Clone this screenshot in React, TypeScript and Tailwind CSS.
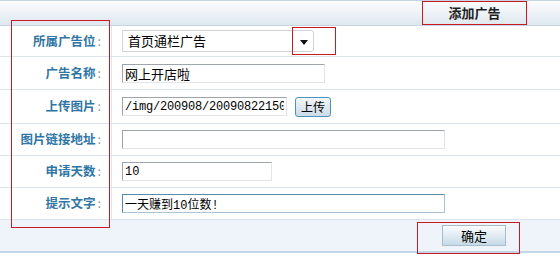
import React from 'react';

const font = { fontFamily: '"Liberation Mono", "Noto Sans CJK SC", monospace' };
const cjk = { fontFamily: '"Noto Sans CJK SC", sans-serif' };

interface RowProps {
  label: string;
  h: string;
  children: React.ReactNode;
}

// 한 줄: 왼쪽 라벨 + 오른쪽 입력
const Row: React.FC<RowProps> = ({ label, h, children }) => (
  <div className={`grid grid-cols-[112px_1fr] border-b border-[#d9e4ed] ${h}`}>
    <div className="flex items-center justify-end pr-[10px] border-r border-[#dde6ee] text-[12.5px] font-bold text-[#2f76a5]" style={cjk}>
      {label}
      <span className="font-normal text-[#8a9aa8] ml-[2px]">:</span>
    </div>
    <div className="flex items-center pl-[10px]">{children}</div>
  </div>
);

const inputCls =
  'h-[19px] bg-white border border-t-[#9da4ab] border-l-[#9da4ab] border-b-[#e2e5e8] border-r-[#e2e5e8] px-[2px] text-[12px] leading-[17px] text-black outline-none';

export default function App() {
  return (
    <div className="relative w-[560px] h-[261px] bg-white overflow-hidden" style={font}>
      {/* header */}
      <div className="h-[26px] border-t border-[#9eb0c0] border-b border-[#c6d5e2] bg-gradient-to-b from-[#fbfcfd] to-[#dfe8ef] flex justify-end">
        <div className="w-[105px] mr-[33px] flex items-center justify-center text-[13px] font-bold text-[#1e1e1e]" style={cjk}>
          添加广告
        </div>
      </div>

      <Row label="所属广告位" h="h-[31px]">
        <div className="relative w-[192px] h-[22px] border border-[#cfd3d7] rounded-r-[3px] bg-white flex items-center pl-[5px] text-[13px]" style={cjk}>
          首页通栏广告
          <svg className="absolute right-[5px] top-[9px]" width="8" height="5" viewBox="0 0 8 5">
            <path d="M0 0 H8 L4 5 Z" fill="#111" />
          </svg>
        </div>
      </Row>
      <Row label="广告名称" h="h-[33px]">
        <input className={`${inputCls} w-[203px] text-[13px]`} style={cjk} defaultValue="网上开店啦" />
      </Row>
      <Row label="上传图片" h="h-[34px]">
        <input className={`${inputCls} w-[165px] tracking-[-0.2px]`} defaultValue="/img/200908/20090822150" />
        <button className="ml-[8px] w-[36px] h-[20px] rounded-[3px] border border-[#4d93bd] bg-gradient-to-b from-[#f3f6f9] to-[#cddbe6] text-[12px] leading-[18px] text-black" style={cjk}>
          上传
        </button>
      </Row>
      <Row label="图片链接地址" h="h-[32px]">
        <input className={`${inputCls} w-[323px]`} defaultValue="" />
      </Row>
      <Row label="申请天数" h="h-[32px]">
        <input className={`${inputCls} w-[150px]`} defaultValue="10" />
      </Row>
      <Row label="提示文字" h="h-[32px]">
        <input
          className="h-[19px] w-[323px] bg-white border border-t-[#5b8aa6] border-l-[#5b8aa6] border-b-[#a9c3d4] border-r-[#a9c3d4] px-[2px] text-[12px] leading-[17px] text-black outline-none"
          defaultValue="一天赚到10位数!"
        />
      </Row>

      {/* footer */}
      <div className="h-[33px] bg-[#eef4f9] border-b-2 border-[#c3d6e6] flex items-center">
        <button className="ml-[442px] w-[64px] h-[21px] border border-[#a9bccb] bg-gradient-to-b from-[#fbfcfd] to-[#c7dae7] text-[13px] leading-[19px] text-black" style={cjk}>
          确定
        </button>
      </div>

      {/* 빨간 주석 박스 */}
      <div className="absolute left-[11px] top-[20px] w-[99px] h-[208px] border border-[#c81a22]" />
      <div className="absolute left-[292px] top-[27px] w-[44px] h-[28px] border border-[#c81a22]" />
      <div className="absolute left-[422px] top-[1px] w-[105px] h-[24px] border border-[#c81a22]" />
      <div className="absolute left-[417px] top-[222px] w-[103px] h-[32px] border border-[#c81a22]" />
    </div>
  );
}
